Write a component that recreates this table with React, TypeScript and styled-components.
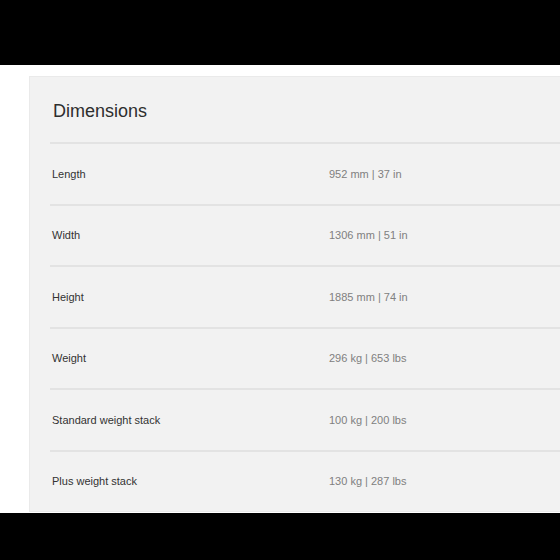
import styled, { createGlobalStyle } from "styled-components";

const specs = [
  { label: "Length", value: "952 mm | 37 in" },
  { label: "Width", value: "1306 mm | 51 in" },
  { label: "Height", value: "1885 mm | 74 in" },
  { label: "Weight", value: "296 kg | 653 lbs" },
  { label: "Standard weight stack", value: "100 kg | 200 lbs" },
  { label: "Plus weight stack", value: "130 kg | 287 lbs" },
];

function App() {
  return (
    <Page>
      <GlobalStyle />
      <TopBar />
      <Section>
        <SpecCard>
          <CardHeader>
            <Title>Dimensions</Title>
          </CardHeader>
          <SpecList>
            {specs.map((spec) => (
              <SpecRow key={spec.label}>
                <SpecLabel>{spec.label}</SpecLabel>
                <SpecValue>{spec.value}</SpecValue>
              </SpecRow>
            ))}
          </SpecList>
        </SpecCard>
      </Section>
      <BottomBar />
    </Page>
  );
}
export default App;

const GlobalStyle = createGlobalStyle`
  html, body {
    margin: 0;
    padding: 0;
    background: #ffffff;
    overflow: hidden;
  }
  body {
    font-family: "Liberation Sans", Arial, sans-serif;
  }
`;

const Page = styled.div`
  display: flex;
  flex-direction: column;
  width: 560px;
  height: 560px;
  overflow: hidden;
`;

const TopBar = styled.div`
  height: 65px;
  flex-shrink: 0;
  background: #000;
`;

const BottomBar = styled.div`
  flex: 1;
  background: #000;
`;

const Section = styled.section`
  padding: 11px 0 1px 29px;
  background: #fff;
`;

const SpecCard = styled.div`
  width: 640px;
  height: 436px;
  box-sizing: border-box;
  background: #f2f2f2;
  border: 1px solid #eaeaea;
  border-right: none;
  padding: 0 0 0 20px;
`;

const CardHeader = styled.div`
  display: flex;
  align-items: center;
  height: 65px;
  padding: 3px 0 0 3px;
  box-sizing: border-box;
`;

const Title = styled.h2`
  margin: 0;
  font-size: 18px;
  font-weight: 400;
  color: #2e2e2e;
`;

const SpecList = styled.div`
  display: flex;
  flex-direction: column;
`;

const SpecRow = styled.div`
  display: grid;
  grid-template-columns: 277px 1fr;
  align-items: center;
  height: 61.5px;
  box-sizing: border-box;
  border-top: 2px solid #e3e3e3;
  padding-left: 2px;
  font-size: 11px;
`;

const SpecLabel = styled.span`
  color: #333;
`;

const SpecValue = styled.span`
  color: #808080;
`;
